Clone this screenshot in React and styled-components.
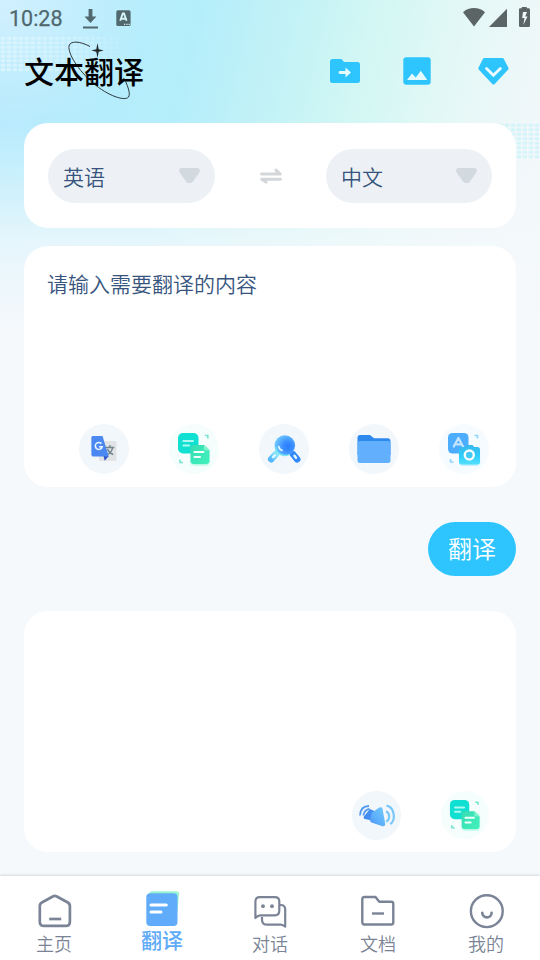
import React from 'react';
import styled, { createGlobalStyle, css } from 'styled-components';

const GlobalStyle = createGlobalStyle`
  * { box-sizing: border-box; }
  body { margin: 0; }
  button { border: 0; padding: 0; background: none; font: inherit; color: inherit; }
  svg { display: block; flex: none; }
`;

const Screen = styled.div`
  width: 540px;
  height: 960px;
  overflow: hidden;
  display: flex;
  flex-direction: column;
  font-family: 'Noto Sans CJK SC', sans-serif;
  font-weight: 350;
  background:
    radial-gradient(ellipse 150px 130px at 0 0, rgba(212, 241, 255, 0.9), rgba(212, 241, 255, 0) 100%),
    linear-gradient(to bottom, rgba(245, 249, 252, 0) 120px, rgba(245, 249, 252, 0.3) 175px, rgba(245, 249, 252, 0.75) 240px, #f5f9fc 330px),
    linear-gradient(103deg, #b7eafd 0, #b5eefb 33%, #c3f2f6 48%, #d3f7f4 62%, #e4f8f6 77%, #f2f7fa 93%) 0 0 / 540px 330px no-repeat,
    #f5f9fc;
`;

const StatusBar = styled.div`
  height: 36px;
  flex: none;
  display: flex;
  align-items: center;
  padding: 0 9px;
  color: #50686e;
`;

const Clock = styled.span`
  font: 400 21.5px/36px Roboto, sans-serif;
  width: 74px;
  padding-top: 1px;
  -webkit-text-stroke: 0.25px currentColor;
`;

const StatusIcons = styled.div`
  display: flex;
  margin-left: ${(p) => (p.$end ? 'auto' : '0')};
`;

const Dots = styled.div`
  position: absolute;
  z-index: 0;
  width: ${(p) => p.$width}px;
  height: 36px;
  ${(p) => p.$right
    ? css`top: 0; right: -24px;`
    : css`top: 0; left: 0; mask-image: linear-gradient(to right, #000, rgba(0, 0, 0, 0.6) 50%, transparent);`}
`;

const Header = styled.header`
  position: relative;
  height: 87px;
  flex: none;
  display: flex;
  align-items: flex-start;
  padding: 0 31px 0 24px;
`;

const Title = styled.h1`
  position: relative;
  margin: 11px 0 0;
  font-size: 30px;
  line-height: 46px;
  font-weight: 500;
  color: #000;
`;

const Orbit = styled.svg`
  position: absolute;
  left: 40px;
  top: -9px;
`;

const Actions = styled.div`
  margin-left: auto;
  height: 70px;
  display: flex;
  align-items: center;
`;

const Action = styled.button`
  margin-left: ${(p) => p.$gap}px;
`;

const Card = styled.section`
  position: relative;
  z-index: 1;
  flex: none;
  display: flex;
  height: ${(p) => p.$height}px;
  padding: ${(p) => p.$padding};
  flex-direction: ${(p) => (p.$row ? 'row' : 'column')};
  justify-content: space-between;
  align-items: ${(p) => (p.$row ? 'center' : 'stretch')};
  border-radius: 24px;
  background: #fff;
`;

const LanguageArea = styled.div`
  position: relative;
  margin: 0 24px 18px;
`;

const Language = styled.button`
  display: flex;
  align-items: center;
  justify-content: space-between;
  width: ${(p) => p.$width}px;
  height: 54px;
  padding: 0 15px;
  border-radius: 27px;
  background: #edf1f5;
  color: #36547d;
  font-size: 21px;
  line-height: 30px;
`;

const Input = styled.div`
  font-size: 21px;
  line-height: 30px;
  color: #36547d;
`;

const Tools = styled.div`
  display: flex;
  justify-content: flex-end;
  gap: 40px;
`;

const Tool = styled.button`
  display: flex;
  align-items: center;
  justify-content: center;
  width: ${(p) => p.$size}px;
  height: ${(p) => p.$size}px;
  border-radius: 50%;
  background: ${(p) => p.$tint};
`;

const Body = styled.main`
  display: flex;
  flex-direction: column;
  padding: 0 24px;
  flex: 1;
`;

const TranslateButton = styled.button`
  align-self: flex-end;
  width: 88px;
  height: 54px;
  margin: 35px 0;
  padding-bottom: 2px;
  border-radius: 27px;
  background: #2ec5ff;
  color: #fff;
  font-size: 24px;
  line-height: 52px;
  flex: none;
`;

const Nav = styled.nav`
  position: relative;
  flex: none;
  height: 84px;
  display: grid;
  grid-template-columns: repeat(5, 1fr);
  background: #fff;
  box-shadow: 0 -1px 2px rgba(50, 65, 80, 0.16);
`;

const Tab = styled.button`
  display: flex;
  flex-direction: column;
  align-items: center;
  padding-top: ${(p) => (p.$active ? 14 : 17)}px;
  color: ${(p) => (p.$active ? '#5fabf8' : '#7b8496')};
`;

const TabLabel = styled.span`
  font-size: ${(p) => (p.$active ? 21 : 18)}px;
  font-weight: ${(p) => (p.$active ? 500 : 350)};
  line-height: 26px;
  margin-top: ${(p) => (p.$active ? 0 : -1)}px;
`;

const DotField = ({ width, right }) => (
  <Dots $width={width} $right={right}>
    <svg width={width} height="36">
      <defs>
        <pattern id={right ? 'dr' : 'dl'} width="6" height="4.5" patternUnits="userSpaceOnUse">
          <rect x="0.5" y="0.6" width="4.8" height="3.2" rx="1.5" fill={right ? '#c9f3f9' : '#e6f9ff'} opacity={right ? 0.75 : 0.65} />
        </pattern>
      </defs>
      <rect width={width} height="36" fill={`url(#${right ? 'dr' : 'dl'})`} />
    </svg>
  </Dots>
);

const Triangle = () => (
  <svg width="21" height="15" viewBox="0 0 21 15">
    <path d="M3 0h15c3 0 3.700 2.700 2.100 5l-6 8.300Q13 15 11.800 15H9.200Q8 15 6.900 13.300L.9 5C-.7 2.700 0 0 3 0z" fill="#d2d9df" />
  </svg>
);

const Swap = () => (
  <svg width="22" height="16" viewBox="0 0 22 16">
    <path d="M1.500 6h18.800L16 2M20.500 11.300H1.700L6 14" fill="none" stroke="#d3d7da" strokeWidth="3" strokeLinecap="round" strokeLinejoin="round" />
    <path d="M15.500 .5v5h5zM6.500 16v-5h-5z" fill="#d3d7da" />
  </svg>
);

const GoogleIcon = () => (
  <svg width="26" height="26" viewBox="0 0 26 26">
    <rect x="8" y="5" width="17.500" height="20" rx="1.500" fill="#e2e3e4" />
    <path d="M14.800 11.500h8.500M19 9v2.500m2.700 0c-.8 3.500-2.800 6-5.700 7.200M16.500 13c1 2.500 3 4.500 5.700 5.500" fill="none" stroke="#72858d" strokeWidth="1.400" />
    <path d="M12.500 20h5.200l-4 4.700z" fill="#3150c5" />
    <path d="M2 0h9.500l6.300 20.500H2.500C1.200 20.500.4 19.600.4 18.200V1.700C.4.700 1 0 2 0z" fill="#4c88f2" />
    <path d="M10.400 7.600a3.500 3.500 0 1 0 .8 3.200H8" fill="none" stroke="#e9f4ff" strokeWidth="1.600" />
  </svg>
);

const CopyIcon = ({ id, size }) => (
  <svg width={size} height={size} viewBox="0 0 34 34">
    <defs>
      <linearGradient id={id} x1="0" y1="0" x2="1" y2="1"><stop stopColor="#36dcb3" /><stop offset="1" stopColor="#42f2bc" /></linearGradient>
      <filter id={`${id}b`}><feGaussianBlur stdDeviation="1" /></filter>
    </defs>
    <rect x="14" y="15" width="18" height="19" rx="4" fill="#35eeb9" opacity=".35" filter={`url(#${id}b)`} />
    <rect x="1" y="1" width="20.500" height="20.500" rx="5" fill="#10e0d1" />
    <path d="M6.500 9h9.500M6.500 13.500H12" stroke="#aaf8ef" strokeWidth="2.200" strokeLinecap="round" />
    <path d="M16 13h11l5.500 5.500V29a3 3 0 0 1-3 3H16.500a3 3 0 0 1-3-3V15.500A2.500 2.500 0 0 1 16 13z" fill={`url(#${id})`} />
    <path d="M27 13v3.500a2 2 0 0 0 2 2h3.500z" fill="#80f4cd" />
    <path d="M17.500 20h9M17.500 25h5.500" stroke="#f1fffb" strokeWidth="2.200" strokeLinecap="round" />
    <path d="M27.800 3.500h3v3M3 27.500v3h3" fill="none" stroke="#78e4ce" strokeWidth="1.600" />
  </svg>
);

const SearchIcon = () => (
  <svg width="34" height="28" viewBox="0 0 34 28">
    <defs>
      <radialGradient id="lens" cx=".65" cy=".55" r=".7"><stop stopColor="#277eff" /><stop offset=".35" stopColor="#3b8eff" /><stop offset="1" stopColor="#79d3ff" /></radialGradient>
      <linearGradient id="handle" x1="1" y1="0" x2="0" y2="1"><stop stopColor="#8be7f7" /><stop offset="1" stopColor="#55b8ff" /></linearGradient>
    </defs>
    <path d="M9.300 18.800 4.200 24.200" stroke="url(#handle)" strokeWidth="6.500" strokeLinecap="round" />
    <path d="m26.200 19.500 4 4.800" stroke="#3188fb" strokeWidth="6.500" strokeLinecap="round" />
    <path d="m7.700 20.400-1.600 1.700M27.500 20.800l1.500 1.900" stroke="#e2f8ff" strokeWidth="2.500" strokeLinecap="round" />
    <circle cx="17.800" cy="10.500" r="10.300" fill="url(#lens)" />
    <path d="M8.200 12.200a10 10 0 0 0 14 7.400" fill="none" stroke="#78e7ef" strokeWidth="1.500" />
    <path d="M11.800 11.700c.4 2.200 1.500 3.300 3.200 3.700" fill="none" stroke="#d8f4ff" strokeWidth="1.800" strokeLinecap="round" />
  </svg>
);

const FolderIcon = () => (
  <svg width="34" height="28" viewBox="0 0 34 28">
    <path d="M3 0h10l4 3.300h13.500a3 3 0 0 1 3 3V20H.5V2.500A2.500 2.500 0 0 1 3 0z" fill="#2e89ee" />
    <path d="M3 6h28a2.500 2.500 0 0 1 2.500 2.500v17A2.500 2.500 0 0 1 31 28H3a2.500 2.500 0 0 1-2.500-2.500v-17A2.500 2.500 0 0 1 3 6z" fill="#62b0fd" />
  </svg>
);

const CameraIcon = () => (
  <svg width="34" height="34" viewBox="0 0 34 34">
    <defs>
      <linearGradient id="cam" x2="0" y2="1"><stop stopColor="#3ab7ee" /><stop offset=".55" stopColor="#2fcdf9" /><stop offset="1" stopColor="#53e0ff" /></linearGradient>
      <filter id="cb"><feGaussianBlur stdDeviation="1" /></filter>
    </defs>
    <rect x="13" y="17" width="19" height="17" rx="3" fill="#41d7ff" opacity=".4" filter="url(#cb)" />
    <rect x="1" y="1" width="20.500" height="20.500" rx="4.500" fill="#4cadff" />
    <path d="m6.800 14.500 4.600-8.500L16 14.500M8.800 12.300h5.100" fill="none" stroke="#c4e4ff" strokeWidth="2.200" strokeLinecap="round" strokeLinejoin="round" />
    <path d="M14 15h4l1.500-2h6l1.700 2H30.500a2.500 2.500 0 0 1 2.500 2.500V30a2.500 2.500 0 0 1-2.500 2.500H14.500a2.500 2.500 0 0 1-2.500-2.500V17.500A2.500 2.500 0 0 1 14 15z" fill="url(#cam)" />
    <circle cx="22.300" cy="23" r="4.500" fill="#42c8f5" stroke="#f8feff" strokeWidth="2.400" />
    <path d="M27.500 3.500h3v3M3.500 27v3h3" fill="none" stroke="#8ed5ff" strokeWidth="1.600" />
  </svg>
);

const SpeakerIcon = () => (
  <svg width="36" height="24" viewBox="0 0 36 24">
    <defs><linearGradient id="sp" x1="0" y1="1" x2="1" y2="0"><stop stopColor="#4c93f5" /><stop offset=".4" stopColor="#5daffa" /><stop offset="1" stopColor="#73cbfb" /></linearGradient></defs>
    <path d="M1 11.500C1.300 5 5 2 10 2M4.300 11.500C5 7.600 7 5.500 10.500 5" fill="none" stroke="#559af2" strokeWidth="1.800" />
    <path d="m11 5 4.200 2v10L5.800 15c-1.500-.4-1.400-2.200-.3-3.200z" fill="#438cf0" />
    <path d="m12.500 9 7-5c1.600-1.200 3.500-1.200 4 .7l2.700 14.500c.4 2.700-1.300 3.400-3.300 2.700L14 19c-2.300-.8-3.300-1.300-2.900-3.200z" fill="url(#sp)" />
    <path d="M27 7.200c4 1.600 4.300 8 .3 10.500M27.500 1.700c8.500 1.700 9.300 14.500 3.800 18.500" fill="none" stroke="#7ac8f8" strokeWidth="2.200" />
  </svg>
);

const HomeIcon = () => (
  <svg width="36" height="38" viewBox="0 0 36 38" fill="none" stroke="currentColor" strokeWidth="2.700" strokeLinecap="round">
    <path d="M17.200 3.300c1-.6 2.200-.6 3.200 0l11 6c1.700.9 2.500 2 2.500 3.800v15.600c0 2.600-1.600 4.200-4.300 4.200H8.100c-2.700 0-4.300-1.600-4.300-4.200V13.100c0-1.700.8-2.900 2.500-3.800z" />
    <path d="M13.200 26h12" strokeLinecap="butt" />
  </svg>
);

const TranslateIcon = () => (
  <svg width="36" height="36" viewBox="0 0 36 36">
    <path d="M8 1.200h24q3.300 0 3 3l-1.700 19L20 28 5 6q0-4.800 3-4.800z" fill="#98f5cf" />
    <rect x="2.300" y="3.200" width="31.200" height="32.800" rx="4" fill="#60acfb" />
    <path d="M7 15h15.300M7 22h10" stroke="#fff" strokeWidth="3" strokeLinecap="round" />
  </svg>
);

const ChatIcon = () => (
  <svg width="36" height="38" viewBox="0 0 36 38" fill="none" stroke="currentColor" strokeWidth="2.200" strokeLinejoin="round">
    <path d="M27.300 12h1.400c2.700 0 4.500 1.800 4.500 4.500v17.200c-1.500-1-2.500-2-4.500-2H15.200c-3.500 0-5.200-1.700-5.200-5V24" />
    <path d="M7.800 4.200h15.100c2.600 0 4.400 1.800 4.400 4.400v9.200c0 2.700-1.800 4.500-4.400 4.500H8.500c-2.200 0-3.300.8-5.100 2.700V8.600c0-2.600 1.800-4.400 4.400-4.400z" />
    <circle cx="11" cy="13.200" r="1.900" fill="currentColor" stroke="none" /><circle cx="20" cy="13.200" r="1.900" fill="currentColor" stroke="none" />
  </svg>
);

const DocumentIcon = () => (
  <svg width="36" height="38" viewBox="0 0 36 38" fill="none" stroke="currentColor" strokeWidth="2.400" strokeLinejoin="round">
    <path d="M4.300 4h11.200l3.800 4.800h12c1.300 0 2 .8 2 2.200v18.300c0 1.400-.7 2.200-2 2.200h-27C3 31.500 2.300 30.700 2.300 29.300V6.200C2.300 4.800 3 4 4.300 4z" />
    <path d="M12 20.500h12" />
  </svg>
);

const FaceIcon = () => (
  <svg width="36" height="38" viewBox="0 0 36 38" fill="none" stroke="currentColor" strokeLinecap="round">
    <circle cx="18.800" cy="18.200" r="15.900" strokeWidth="2.400" />
    <path d="M14.200 19.700c.4 6.200 9.100 6.200 9.400 0" strokeWidth="2.600" />
  </svg>
);

const tabs = [
  ['主页', HomeIcon],
  ['翻译', TranslateIcon],
  ['对话', ChatIcon],
  ['文档', DocumentIcon],
  ['我的', FaceIcon],
];

export default function App() {
  return (
    <>
      <GlobalStyle />
      <Screen>
        <StatusBar>
          <Clock>10:28</Clock>
          <StatusIcons>
            <svg width="48" height="24" viewBox="83 6 48 24" fill="currentColor">
              <path d="M88.600 9h3.800v7.500h4L90.500 23l-6-6.500h4.100zM83 26.500h15v2H83z" />
              <rect x="116.300" y="10.300" width="14.300" height="15.800" rx="1.600" />
              <path d="m120.200 20.700 2.600-7.300h1.200l2.600 7.300M121 18.700h5" fill="none" stroke="#d5f5fa" strokeWidth="1.900" />
              <path d="M124 24.300h1.200m1.200 0h1.200m1 0h1.200" stroke="#d5f5fa" strokeWidth="1.200" />
            </svg>
          </StatusIcons>
          <StatusIcons $end>
            <svg width="69" height="24" viewBox="462 6 69 24" fill="#5c6565">
              <path d="M463 12.300c6-5.600 16-5.600 22 0L474 26.500zM507 8.800V27h-18zM519 9.300q0-1 1.200-1h1.600V7h5v1.300h1.800q1.400 0 1.400 1.400v15.800q0 1.500-1.400 1.500h-8.200q-1.400 0-1.400-1.500z" />
              <path d="m523 12-.8 6h2.300l-1.200 7 4.200-8.500h-2.300l1.800-4.500z" fill="#f0f8f8" />
            </svg>
          </StatusIcons>
        </StatusBar>
        <Header>
          <DotField width={140} />
          <Title>
            文本翻译
            <Orbit width="70" height="66" viewBox="64 38 70 66">
              <path d="M90 46.500C80 41 70 40.500 69 46c-1 8 9 24 24 37 15 13 32 18.500 35.500 14 2-3 0-9-3.500-17" fill="none" stroke="#101719" strokeWidth=".85" />
              <path d="m97.500 43 1.200 6.300 5 1.200-5 1.200-1.200 6.300-1.200-6.300-5-1.200 5-1.200z" fill="#222a2c" />
            </Orbit>
          </Title>
          <Actions>
            <Action $gap={0}>
              <svg width="30" height="24" viewBox="0 0 30 24">
                <path d="M2.500 0h9L14 3h13.500A2.500 2.500 0 0 1 30 5.500v16a2.500 2.500 0 0 1-2.500 2.500h-25A2.500 2.500 0 0 1 0 21.500v-19A2.500 2.500 0 0 1 2.500 0z" fill="#2ec5ff" />
                <path d="M10 13.500h6" stroke="#e4fbff" strokeWidth="2.800" strokeLinecap="round" />
                <path d="m15.500 8.500 5.500 5-5.500 5z" fill="#e4fbff" />
              </svg>
            </Action>
            <Action $gap={43}>
              <svg width="28" height="28" viewBox="0 0 28 28">
                <rect x=".3" y=".3" width="27.400" height="27.400" rx="3" fill="#2ec5ff" />
                <path d="m4 23 5-6.500 3.800 4 5-6.800L24.300 23z" fill="#e5faff" />
              </svg>
            </Action>
            <Action $gap={47}>
              <svg width="31" height="27" viewBox="0 0 31 27">
                <path d="M6.500 0h17.700q1 0 1.500.8l4.700 9q.5.900-.2 1.700L16.700 25.900q-1.200 1.200-2.400 0L.7 11.500Q0 10.700.5 9.800L5 .8Q5.500 0 6.500 0z" fill="#2ec5ff" />
                <path d="m8.500 10.500 6.900 6.800 7-6.800" fill="none" stroke="#ecfbff" strokeWidth="2.800" strokeLinecap="round" />
              </svg>
            </Action>
          </Actions>
        </Header>
        <LanguageArea>
          <DotField width={42} right />
          <Card $height={105} $padding="0 24px" $row>
            <Language $width={167}>英语<Triangle /></Language>
            <Swap />
            <Language $width={166}>中文<Triangle /></Language>
          </Card>
        </LanguageArea>
        <Body>
          <Card $height={241} $padding="22px 27px 13px 23px">
            <Input>请输入需要翻译的内容</Input>
            <Tools>
              <Tool $size={50} $tint="#f2f7fc"><GoogleIcon /></Tool>
              <Tool $size={50} $tint="#f5fdfd"><CopyIcon id="copy-source" size={34} /></Tool>
              <Tool $size={50} $tint="#f2f7fc"><SearchIcon /></Tool>
              <Tool $size={50} $tint="#f2f7fc"><FolderIcon /></Tool>
              <Tool $size={50} $tint="#f5fbff"><CameraIcon /></Tool>
            </Tools>
          </Card>
          <TranslateButton>翻译</TranslateButton>
          <Card $height={241} $padding="180px 27px 12px">
            <Tools>
              <Tool $size={49} $tint="#f2f7fc"><SpeakerIcon /></Tool>
              <Tool $size={48} $tint="#f5fdfd"><CopyIcon id="copy-result" size={32} /></Tool>
            </Tools>
          </Card>
        </Body>
        <Nav>
          {tabs.map(([label, Icon]) => {
            const active = label === '翻译';
            return (
              <Tab key={label} $active={active}>
                <Icon />
                <TabLabel $active={active}>{label}</TabLabel>
              </Tab>
            );
          })}
        </Nav>
      </Screen>
    </>
  );
}
